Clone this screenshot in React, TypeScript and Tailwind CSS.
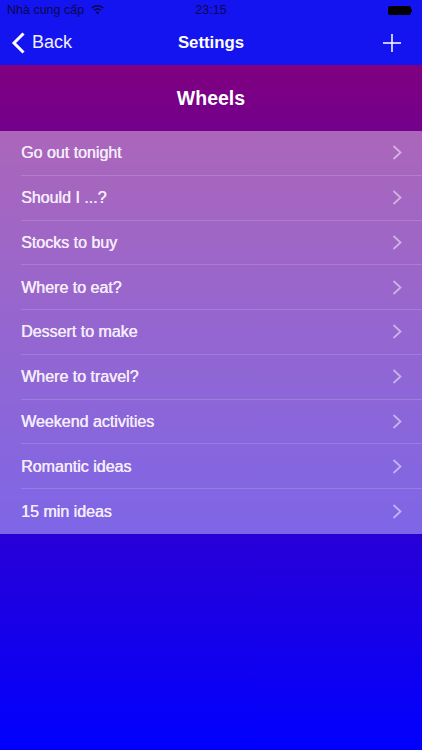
const wheels = [
  'Go out tonight',
  'Should I ...?',
  'Stocks to buy',
  'Where to eat?',
  'Dessert to make',
  'Where to travel?',
  'Weekend activities',
  'Romantic ideas',
  '15 min ideas',
];

const WifiIcon = () => (
  <svg width="13" height="10" viewBox="0 0 13 10" className="ml-[7px]" fill="#0a0a4a">
    <path d="M6.5 0C4 0 1.900 1 .3 2.600l1.100 1.100C2.700 2.400 4.500 1.600 6.500 1.600s3.800.8 5.100 2.100l1.100-1.100C11.100 1 9 0 6.500 0z" />
    <path d="M6.500 3.200c-1.500 0-2.900.6-3.900 1.600l1.100 1.100c.7-.7 1.700-1.100 2.800-1.100s2.100.4 2.800 1.100l1.100-1.100c-1-1-2.400-1.600-3.900-1.600z" />
    <path d="M6.500 6.400c-.8 0-1.300.3-1.800.8l1.800 2.300 1.800-2.300c-.5-.5-1-.8-1.800-.8z" />
  </svg>
);

const Chevron = () => (
  <svg width="10" height="15" viewBox="0 0 10 15" fill="none" stroke="white" strokeOpacity="0.5" strokeWidth="1.800">
    <path d="M1.500 1l7 6.500-7 6.500" />
  </svg>
);

export default function App() {
  return (
    <div className="relative h-[750px] w-[422px] overflow-hidden font-['Liberation_Sans',Arial,sans-serif] text-white">
      {/* blue bar on top */}
      <div className="h-[65px] bg-[#1414f0]">
        <div className="relative flex h-5 items-center px-[7px] text-[12.500px] text-[#0a0a4a]">
          <span>Nhà cung cấp</span>
          <WifiIcon />
          <span className="absolute left-0 right-0 text-center">23:15</span>
          <div className="ml-auto mr-[3px] flex items-center">
            <div className="h-[9px] w-[23px] rounded-[2px] bg-black" />
            <div className="h-[3px] w-[1px] bg-black" />
          </div>
        </div>
        <div className="relative flex h-[45px] items-center justify-between">
          <div className="flex items-center pl-[10px]">
            <svg width="18" height="24" viewBox="0 0 18 24" fill="none" stroke="white" strokeWidth="3">
              <path d="M13.500 2.500L4 12l9.500 9.500" />
            </svg>
            <span className="ml-[4px] text-[18px] text-[#eef]">Back</span>
          </div>
          <span className="absolute left-0 right-0 text-center text-[16.800px] font-bold">Settings</span>
          <svg width="18" height="18" viewBox="0 0 18 18" className="mr-[21px]" stroke="white" strokeWidth="1.500">
            <path d="M9 0v18M0 9h18" />
          </svg>
        </div>
      </div>

      <div className="h-[685px] bg-linear-to-b/srgb from-[#800080] to-[#0000ff]">
        <div className="flex h-[66px] items-center justify-center pt-px text-[19.500px] font-bold">Wheels</div>
        <div className="bg-white/40">
          {wheels.map((name, i) => (
            <div key={name} className="flex h-[44.780px] flex-col pl-[21px]">
              <div className="flex flex-1 items-center pr-[20px]">
                <span className="flex-1 pt-px text-[16px] text-[#f4ecfa] [text-shadow:0.4px_0_0_#f4ecfa]">{name}</span>
                <Chevron />
              </div>
              {i < wheels.length - 1 && <div className="h-px bg-white/15" />}
            </div>
          ))}
        </div>
      </div>
    </div>
  );
}
